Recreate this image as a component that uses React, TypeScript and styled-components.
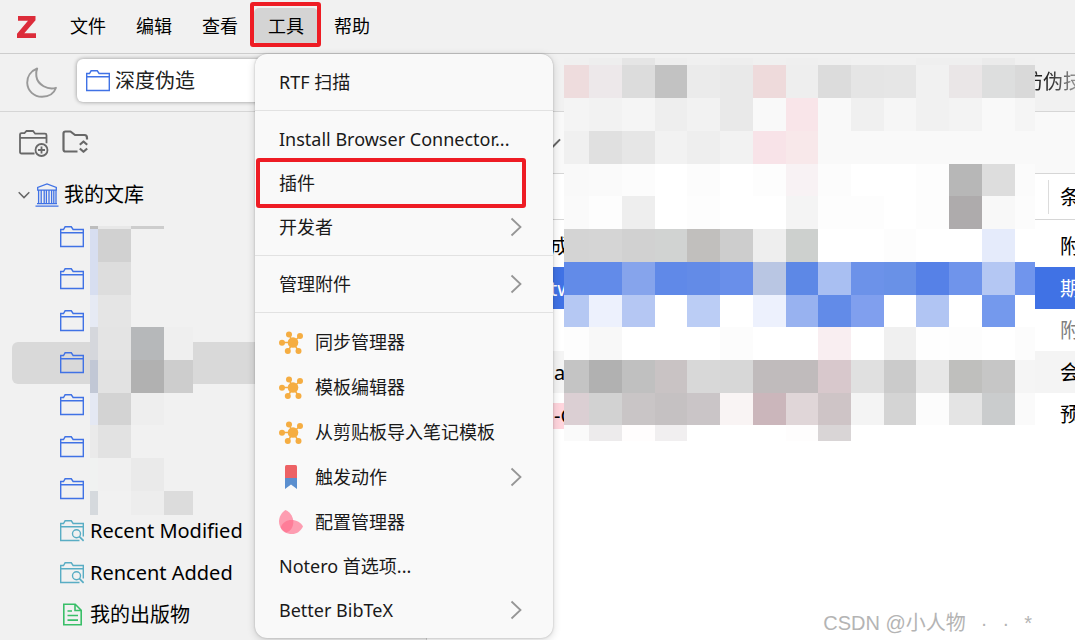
import React from 'react';
import styled, { createGlobalStyle, css } from 'styled-components';

const Global = createGlobalStyle`
  * { box-sizing: border-box; }
  body {
    margin: 0;
    overflow: hidden;
    background: #fff;
    color: #000;
    font-family: "Noto Sans", "Noto Sans CJK SC", sans-serif;
    font-size: 20px;
    line-height: 28px;
  }
  button { font: inherit; color: inherit; border: 0; background: none; padding: 0; margin: 0; }
  svg { display: block; flex: none; }
`;

const Page = styled.div`
  position: relative;
  display: flex;
  flex-direction: column;
  min-height: 100vh;
  overflow: hidden;
`;

const MenuBar = styled.nav`
  display: flex;
  height: 54px;
  padding-left: 17px;
  background: #f1f1f1;
  border-bottom: 1px solid #cdcdcd;
`;

const Logo = styled.div`
  display: flex;
  align-items: center;
  width: 39px;
`;

const MenuSlot = styled.div`
  position: relative;
  display: flex;
  align-items: flex-start;
  padding-top: 8px;
  margin-right: 2px;
`;

const MenuButton = styled.button<{ $open?: boolean }>`
  height: 36px;
  padding: 0 14px;
  border-radius: 5px;
  font-size: 18px;
  line-height: 36px;
  background: ${(p) => (p.$open ? '#d4d4d4' : 'transparent')};
`;

const marker = css`
  position: absolute;
  border: 4px solid #ee1c24;
  border-radius: 3px;
  pointer-events: none;
`;

const ButtonMarker = styled.span`
  ${marker}
  inset: 2px -3px 6px -4px;
`;

const ItemMarker = styled.span`
  ${marker}
  inset: -3px 27px -3px 1px;
`;

const Popup = styled.div`
  position: absolute;
  z-index: 5;
  top: 54px;
  left: 1px;
  width: 298px;
  padding: 6px 0;
  border-radius: 12px;
  background: #f9f9f9;
  box-shadow: 0 0 2px rgba(0, 0, 0, 0.25), 0 2px 8px rgba(0, 0, 0, 0.16);
`;

const PopupItem = styled.button<{ $tall?: boolean }>`
  position: relative;
  display: flex;
  align-items: center;
  gap: 12px;
  width: 100%;
  height: ${(p) => (p.$tall ? 45 : 44)}px;
  padding: 0 31px 0 24px;
  font-size: 18px;
  color: #1a1a1a;
  text-align: left;
  white-space: nowrap;
`;

const PopupLabel = styled.span`
  flex: 1;
`;

const Separator = styled.hr`
  height: 1px;
  margin: 6px 0;
  border: 0;
  background: #e2e2e2;
`;

const TabBar = styled.header`
  display: flex;
  align-items: flex-start;
  height: 58px;
  padding: 5px 0 0 25px;
  background: #f1f1f1;
  border-bottom: 1px solid #d6d6d6;
`;

const MoonButton = styled.button`
  width: 52px;
  padding-top: 7px;
`;

const Tab = styled.button<{ $active?: boolean }>`
  display: flex;
  align-items: center;
  gap: 5px;
  height: 43px;
  padding: 0 9px;
  border-radius: 6px;
  color: #222;
  white-space: nowrap;
  ${(p) =>
    p.$active &&
    css`
      width: 440px;
      background: #fff;
      box-shadow: 0 0 4px rgba(0, 0, 0, 0.4);
    `}
`;

const FadingTab = styled(Tab)`
  flex: 1;
  min-width: 0;
  justify-content: flex-end;
  padding: 2px 0 0;
  margin-right: -8px;
  mask-image: linear-gradient(to left, rgba(0, 0, 0, 0.3) 0, #000 36px);
`;

const Body = styled.div`
  display: flex;
  flex: 1;
`;

const Sidebar = styled.aside`
  width: 427px;
  flex: none;
  background: #f1f1f1;
  border-right: 1px solid #d0d0d0;
`;

const SideTools = styled.div`
  display: flex;
  align-items: flex-start;
  gap: 11px;
  height: 62px;
  padding: 17px 0 0 18px;
`;

const Tree = styled.ul`
  list-style: none;
  margin: 0;
  padding: 0 12px;
`;

const TreeRow = styled.li<{ $root?: boolean; $selected?: boolean }>`
  display: flex;
  align-items: center;
  gap: ${(p) => (p.$root ? 5 : 6)}px;
  height: 42px;
  padding-left: ${(p) => (p.$root ? 6 : 48)}px;
  border-radius: 6px;
  background: ${(p) => (p.$selected ? '#d9d9d9' : 'transparent')};
`;

const Main = styled.main`
  flex: 1;
  min-width: 0;
`;

const MainTools = styled.div`
  display: flex;
  align-items: center;
  height: 62px;
  padding-left: 118px;
  background: #f9f9f9;
  border-bottom: 1px solid #d6d6d6;
`;

const Items = styled.table`
  width: 100%;
  table-layout: fixed;
  border-collapse: separate;
  border-spacing: 0;
  white-space: nowrap;
`;

const NameCol = styled.col``;

const TypeCol = styled.col`
  width: 27px;
`;

const Head = styled.th`
  height: 46px;
  padding: 0;
  border-bottom: 1px solid #d6d6d6;
  font-weight: 400;
  text-align: left;
`;

const HeadLabel = styled.div`
  height: 34px;
  padding: 4px 0 0 11px;
  border-left: 1px solid #dcdcdc;
  overflow: hidden;
`;

const Spacer = styled.td`
  height: 5px;
  padding: 0;
`;

type Tone = 'plain' | 'selected' | 'muted' | 'striped';

const ItemRow = styled.tr<{ $tone: Tone }>`
  background: ${(p) => (p.$tone === 'selected' ? '#4072e5' : p.$tone === 'striped' ? '#f4f4f4' : '#fff')};
  color: ${(p) => (p.$tone === 'selected' ? '#fff' : p.$tone === 'muted' ? '#7f7f7f' : '#000')};
`;

const NameCell = styled.td`
  height: 42px;
  padding: 2px 0 0 123px;
  overflow: hidden;
`;

const TypeCell = styled.td`
  padding: 2px 0 0 12px;
  overflow: hidden;
`;

const Highlight = styled.span`
  display: inline-block;
  height: 26px;
  padding-left: 4px;
  line-height: 26px;
  background: #ffd5dd;
  vertical-align: middle;
`;

const Indent = styled.span`
  padding-left: 4px;
`;

const Mosaic = styled.div<{ $cols: string; $rows: string; $left: number; $top: number }>`
  position: absolute;
  left: ${(p) => p.$left}px;
  top: ${(p) => p.$top}px;
  display: grid;
  grid-template-columns: ${(p) => p.$cols};
  grid-template-rows: ${(p) => p.$rows};
  pointer-events: none;
`;

const Tile = styled.i``;

const Watermark = styled.div`
  position: absolute;
  right: 43px;
  bottom: 3px;
  display: flex;
  gap: 15px;
  font-family: "Liberation Sans", "Noto Sans CJK SC", sans-serif;
  color: #b4b4b4;
  white-space: nowrap;
`;

const px = (values: number[]) => values.map((v) => `${v}px`).join(' ');

const mainCols = [25, 33, 33, 32, 33, 33, 33, 32, 33, 33, 32, 33, 33, 33, 20];
const mainRows = [7, 33, 33, 33, 32, 33, 33, 33, 32, 33, 33, 32, 16];
const mainTiles = `
f0f0f0 eeeeee e5e5e5 eeeeee f0f0f0 eeeeee f0f0f0 efefef f0f0f0 f1f1f1 f1f1f1 efefef efefef ebebeb f0f0f0
eedcdd ede8ea dcdcdc c2c2c2 ebebeb e9e9e9 eedadb eeeeee dcdcdc e5e5e5 e6e6e6 f1f1f1 eae6e7 dddede d9d9d9
f4f4f4 f2f2f2 f5f5f5 eeeeee f2f2f2 e9e9e9 f9f9f9 f9e5e9 f9f9f9 f0f0f0 f6f6f6 f1f1f1 f3f3f3 f9f9f9 f5f5f5
f0f0f0 e0e0e0 e6e6e6 f2f2f2 eeeeee f2f2f2 f8e3e8 f8e8ea f9f9f9 f9f9f9 f9f9f9 f9f9f9 f9f9f9 f9f9f9 f9f9f9
f9f9f9 fafafa fcfcfc ffffff fcfcfc ffffff fdfdfd f8f2f4 fcfcfc ffffff ffffff fdfdfd b7b7b7 dddddd fbfbfb
fafafa fdfdfd eeeeee ffffff fdfdfd ffffff ffffff f4f4f4 fdfdfd fdfdfd ffffff fdfdfd aeabac f8f8f8 fcfcfc
d4d4d4 d5d5d5 d1d1d1 d1d3d2 c1bfbd cdcdcd eeeeee cdd0ce ffffff ffffff fdfdfd ffffff ffffff e5ebfb ffffff
628be8 628be9 86a4ec 6089e8 638be7 698fea b9c6e3 5d88e6 a9bff2 6c92e9 6991e7 5681e7 6f94eb b4c7f3 7095ed
b5c8f3 edf1fd b5c7f3 ffffff bbcdf5 ffffff edf1fd 98b2f0 628be8 809fee ffffff b1c5f3 ffffff 7499ed ffffff
fdfdfd f8f8f8 ffffff ffffff ffffff fcfcfc ffffff ffffff f9eef1 ffffff f0f0f0 fefefe fdfdfd ffffff fcfcfc
c4c4c4 b1b1b1 c0c0c0 c9c3c4 d8d8d8 d7d7d7 c0bbbc c0bbbc d8c8cc e0e0e0 cbcbcb e7e7e7 bfbfbd c6c6c6 f5f5f5
dbcfd3 d2d2d2 c9c5c6 c5c1c2 cac5c7 f9f4f4 cbb6bb e0d6d8 cec4c6 f4f4f4 d4d4d4 fcfcfc e4e4e4 cacccd fafafa
fafafa edebec fffdfd f1eff0 ffffff ffffff ffffff fefdfd d9d5d6 ffffff ffffff ffffff ffffff ffffff ffffff`;

const sideCols = [8, 33, 33, 29];
const sideRows = [3, 33, 33, 32, 33, 33, 32, 33, 33, 24];
const sideTiles = `
bdbdbd e8e8e8 cdcdcd f1f1f1
d7def0 d1d1d1 f1f1f1 f1f1f1
d7def0 dddddd f1f1f1 f1f1f1
e6eaf4 e5e5e5 f1f1f1 f1f1f1
d5d7dc e4e4e4 b6b8ba efefef
c1c7d5 e2e2e2 b1b1b1 cdcdcd
e4e8f3 d3d3d3 eeeeee f1f1f1
eaeaea e2e2e2 f1f1f1 f1f1f1
f0f2f1 f0f0f0 eaeaea f1f1f1
d5d9dd f1f1f1 ededed dcdcdc`;

const Tiles = ({ data }: { data: string }) => (
  <>
    {data.trim().split(/\s+/).map((c, i) => (
      <Tile key={i} style={{ background: `#${c}` }} />
    ))}
  </>
);

const FolderIcon = () => (
  <svg width="24" height="24" viewBox="0 0 24 24" fill="none" stroke="#4072e5" strokeWidth="1.4">
    <path d="M.7 21.5V4.500h2.800l1.600-2.700h6.200l1.800 2.700h10.200v17zM.7 7.700h22.600" />
  </svg>
);

const SearchFolderIcon = () => (
  <svg width="24" height="24" viewBox="0 0 24 24" fill="none" stroke="#59adc4" strokeWidth="1.4">
    <path d="M19.500 21.500H.7V4.500h2.800l1.600-2.700h6.200l1.800 2.700h10.200v13M.7 7.700h22.600" />
    <circle cx="16.500" cy="14.700" r="4" />
    <path d="M19.400 17.700l4.200 4.200" strokeWidth="1.700" />
  </svg>
);

const DocIcon = () => (
  <svg width="24" height="24" viewBox="0 0 24 24" fill="none" stroke="#39bf68" strokeWidth="1.6">
    <path d="M3.800 1.300h11.400l6 6v14.500H3.800zM15 1.500v6h6M7.500 8h4.500M7.500 12.500h10.500M7.500 17.100h10.500" />
  </svg>
);

const LibraryIcon = () => (
  <svg width="24" height="24" viewBox="0 0 24 24" fill="none" stroke="#4072e5" strokeWidth="1.3">
    <path d="M2.700 7.200V4.500L12 .9l9.300 3.600v2.700zM3.600 7.500v13M6.200 7.500v13M9.200 7.500v13M11.400 7.500v13M14 7.500v13M16.600 7.500v13M18.800 7.500v13M21 7.500v13M2 20.600h20M.5 23.200h23" />
  </svg>
);

const ChevronDown = ({ size = 12 }: { size?: number }) => (
  <svg width={size} height={size} viewBox="0 0 12 12" fill="none" stroke="#666" strokeWidth="1.5">
    <path d="M.7 3.300L6 8.600l5.300-5.300" />
  </svg>
);

const ChevronRight = () => (
  <svg width="12" height="20" viewBox="0 0 12 20" fill="none" stroke="#969696" strokeWidth="1.8">
    <path d="M1.500 1.500L10.500 10l-9 8.500" />
  </svg>
);

const MoonIcon = () => (
  <svg width="34" height="34" viewBox="0 0 34 34" fill="none" stroke="#999" strokeWidth="1.9" strokeLinejoin="round">
    <path d="M12.200 2.500C5.800 5 2 10.500 2.200 16.800C2.500 25 9 30.800 17 30.800C23.500 30.800 29 27.500 31 21.800C23 24.300 12.500 19 11.300 10C11 7 11.300 4.500 12.200 2.500z" />
  </svg>
);

const NewFolderIcon = () => (
  <svg width="32" height="30" viewBox="0 0 32 30" fill="none" stroke="#686868" strokeWidth="1.8">
    <path d="M16.500 24.500H3.500q-1.500 0-1.500-1.500V5.500q0-1.300 1.500-1.300h3l2-2.200h6.500l2.200 2.700h9.800q1.500 0 1.500 1.500v8M2 8.800h26.500" />
    <circle cx="23.500" cy="21" r="6" />
    <path d="M23.500 17.500v7M20 21h7" />
  </svg>
);

const SortFolderIcon = () => (
  <svg width="28" height="28" viewBox="0 0 28 28" fill="none" stroke="#686868" strokeWidth="2.200" strokeLinejoin="round">
    <path d="M16.500 22.500H4.500Q2.500 22.500 2.500 20.500V4.500Q2.500 2.500 4.500 2.500h5l4.500 3.500h9.500Q26 6 26 9v1.500M18.800 15.800l3.700-3.300 3.700 3.300M18.800 19.500l3.700 3.300 3.700-3.300" />
  </svg>
);

const MoleculeIcon = () => (
  <svg width="24" height="24" viewBox="0 0 24 24" fill="#f5ad42" stroke="#f5ad42">
    <path d="M14 12.500L3 12.500M14 12.500L10 4.500M14 12.500l7-6.500M14 12.500l5.500 8.500M14 12.500l-5 8.500" strokeWidth="1.500" />
    <g stroke="none">
      <circle cx="14" cy="12.500" r="5.300" />
      <circle cx="3" cy="12.700" r="3" />
      <circle cx="10" cy="4.500" r="3" />
      <circle cx="21" cy="6" r="3" />
      <circle cx="19.500" cy="21" r="3" />
      <circle cx="8.800" cy="21" r="3" />
    </g>
  </svg>
);

const RibbonIcon = () => (
  <svg width="24" height="24" viewBox="0 0 24 24">
    <path d="M6 13h12v11l-6-4.500L6 24z" fill="#5b8fcf" />
    <path d="M7.500 0h9q1.500 0 1.500 1.500V13H6V1.500Q6 0 7.500 0z" fill="#ed6265" />
  </svg>
);

const PetalIcon = () => (
  <svg width="24" height="24" viewBox="0 0 24 24" fill="#ff6b8b" fillOpacity="0.65">
    <path d="M6.500 0C12 2.500 14.300 7.500 14.300 12c0 5-2.300 9-7 10.500C2.500 20.500 0 16 0 11.500C0 7 2.500 2.500 6.500 0z" />
    <path d="M24 16.500c-2.500 5-6.500 7.500-11 7.500c-5.500 0-10-2.500-11.300-6.500C3.500 12.500 7.500 10 12.500 10c5 0 9.500 2.500 11.500 6.500z" />
  </svg>
);

type Entry = { label: string; icon?: React.ReactNode; sub?: boolean; marked?: boolean };

const groups: Entry[][] = [
  [{ label: 'RTF 扫描' }],
  [
    { label: 'Install Browser Connector...' },
    { label: '插件', marked: true },
    { label: '开发者', sub: true },
  ],
  [{ label: '管理附件', sub: true }],
  [
    { label: '同步管理器', icon: <MoleculeIcon /> },
    { label: '模板编辑器', icon: <MoleculeIcon /> },
    { label: '从剪贴板导入笔记模板', icon: <MoleculeIcon /> },
    { label: '触发动作', icon: <RibbonIcon />, sub: true },
    { label: '配置管理器', icon: <PetalIcon /> },
    { label: 'Notero 首选项...' },
    { label: 'Better BibTeX', sub: true },
  ],
];

const menus = ['文件', '编辑', '查看', '工具', '帮助'];

const ToolsPopup = () => (
  <Popup role="menu">
    {groups.map((group, g) => (
      <React.Fragment key={g}>
        {g > 0 && <Separator />}
        {group.map((e) => (
          <PopupItem key={e.label} role="menuitem" $tall={!!e.icon}>
            {e.icon}
            <PopupLabel>{e.label}</PopupLabel>
            {e.sub && <ChevronRight />}
            {e.marked && <ItemMarker />}
          </PopupItem>
        ))}
      </React.Fragment>
    ))}
  </Popup>
);

export default function App() {
  return (
    <Page>
      <Global />
      <MenuBar>
        <Logo>
          <svg width="20" height="22" viewBox="0 0 20 22" fill="#dc2c3a">
            <path d="M1 0h17.500v4.200L7.300 17.300H19V22H0v-4.300L11 4.700H1z" />
          </svg>
        </Logo>
        {menus.map((m) => (
          <MenuSlot key={m}>
            <MenuButton $open={m === '工具'}>{m}</MenuButton>
            {m === '工具' && (
              <>
                <ToolsPopup />
                <ButtonMarker />
              </>
            )}
          </MenuSlot>
        ))}
      </MenuBar>

      <TabBar>
        <MoonButton aria-label="Dark mode">
          <MoonIcon />
        </MoonButton>
        <Tab $active>
          <FolderIcon />
          深度伪造
        </Tab>
        <FadingTab>防伪技</FadingTab>
      </TabBar>

      <Body>
        <Sidebar>
          <SideTools>
            <button aria-label="New collection">
              <NewFolderIcon />
            </button>
            <button aria-label="Collapse collections">
              <SortFolderIcon />
            </button>
          </SideTools>
          <Tree>
            <TreeRow $root>
              <ChevronDown />
              <LibraryIcon />
              我的文库
            </TreeRow>
            {[0, 1, 2, 3, 4, 5, 6].map((i) => (
              <TreeRow key={i} $selected={i === 3}>
                <FolderIcon />
              </TreeRow>
            ))}
            <TreeRow>
              <SearchFolderIcon />
              Recent Modified
            </TreeRow>
            <TreeRow>
              <SearchFolderIcon />
              Rencent Added
            </TreeRow>
            <TreeRow>
              <DocIcon />
              我的出版物
            </TreeRow>
          </Tree>
        </Sidebar>

        <Main>
          <MainTools>
            <ChevronDown size={16} />
          </MainTools>
          <Items>
            <colgroup>
              <NameCol />
              <TypeCol />
            </colgroup>
            <thead>
              <tr>
                <Head />
                <Head>
                  <HeadLabel>条</HeadLabel>
                </Head>
              </tr>
            </thead>
            <tbody>
              <tr>
                <Spacer colSpan={2} />
              </tr>
              <ItemRow $tone="plain">
                <NameCell>成</NameCell>
                <TypeCell>附</TypeCell>
              </ItemRow>
              <ItemRow $tone="selected">
                <NameCell>tw</NameCell>
                <TypeCell>期</TypeCell>
              </ItemRow>
              <ItemRow $tone="muted">
                <NameCell />
                <TypeCell>附</TypeCell>
              </ItemRow>
              <ItemRow $tone="striped">
                <NameCell>
                  <Indent>a</Indent>
                </NameCell>
                <TypeCell>会</TypeCell>
              </ItemRow>
              <ItemRow $tone="plain">
                <NameCell>
                  <Highlight>-C</Highlight>
                </NameCell>
                <TypeCell>预</TypeCell>
              </ItemRow>
            </tbody>
          </Items>
        </Main>
      </Body>

      <Mosaic $left={564} $top={58} $cols={px(mainCols)} $rows={px(mainRows)}>
        <Tiles data={mainTiles} />
      </Mosaic>
      <Mosaic $left={90} $top={226} $cols={px(sideCols)} $rows={px(sideRows)}>
        <Tiles data={sideTiles} />
      </Mosaic>

      <Watermark>
        <span>CSDN @小人物</span>
        <span>·</span>
        <span>·</span>
        <span>*</span>
      </Watermark>
    </Page>
  );
}
